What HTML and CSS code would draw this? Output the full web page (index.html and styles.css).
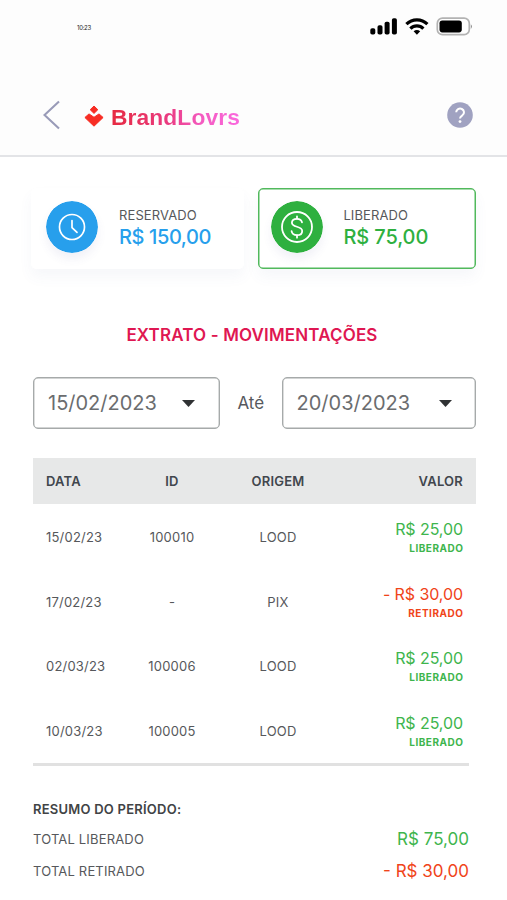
FILE: index.html
```html
<!DOCTYPE html>
<html lang="pt-BR">
<head>
<meta charset="utf-8">
<meta name="viewport" content="width=device-width, initial-scale=1">
<title>BrandLovrs - Extrato</title>
<link rel="stylesheet" href="styles.css">
</head>
<body>
<header class="top">
  <div class="status">
    <span class="time">10:23</span>
    <svg class="status-icons" width="104" height="20" viewBox="0 0 104 20">
      <rect x="0.3" y="11.3" width="5" height="6.2" rx="1.8"/>
      <rect x="7.5" y="8.3" width="5" height="9.2" rx="1.8"/>
      <rect x="14.6" y="4.8" width="5" height="12.7" rx="1.8"/>
      <rect x="21.9" y="1.3" width="5" height="16.2" rx="1.8"/>
      <g fill="none" stroke="#000" stroke-width="3.2">
        <path d="M36.4 7.2a15 15 0 0 1 21 0"/>
        <path d="M40.4 11.6a9.2 9.2 0 0 1 13 0"/>
      </g>
      <path d="M43.6 14.3a5.2 5.2 0 0 1 6.6 0L46.9 17.8z"/>
      <rect x="67.3" y="1.2" width="32" height="16.4" rx="5.2" fill="#fff" stroke="#b3b3b3" stroke-width="1.7"/>
      <rect x="69.5" y="3.4" width="22.3" height="12" rx="2.8"/>
      <path d="M100.8 7.3a3 3 0 0 1 0 4.6z" fill="#888"/>
    </svg>
  </div>
  <div class="nav">
    <svg class="back" width="18" height="30" viewBox="0 0 18 30"><path d="M16 1.5L1.5 15L16 28.5" fill="none" stroke="#999bb8" stroke-width="2.1"/></svg>
    <svg class="mark" width="20" height="22" viewBox="0 0 20 22" fill="#f72d24" stroke="#f72d24" stroke-width="1" stroke-linejoin="round">
      <path d="M10 1L13.8 4.7L10 8.4L6.2 4.7z"/>
      <path d="M.9 12.5L5 8.9L10 12.3L15 8.9L19.1 12.5L10 21.2z"/>
    </svg>
    <span class="brand">BrandLovrs</span>
    <svg class="help" width="26" height="26" viewBox="0 0 26 26"><circle cx="13" cy="13" r="12.8" fill="#a0a2c1"/><path d="M9.2 10.3a3.9 3.7 0 1 1 6.2 3C14 14.2 13 14.8 13 16.6" fill="none" stroke="#fff" stroke-width="2"/><circle cx="13" cy="19.6" r="1.4" fill="#fff"/></svg>
  </div>
</header>
<main class="content">
  <section class="cards">
    <div class="card reserved">
      <svg class="disc" width="52" height="52" viewBox="0 0 52 52"><circle cx="26" cy="26" r="26" fill="#279fec"/><g fill="none" stroke="#fff" stroke-width="1.7" stroke-linecap="round" stroke-linejoin="round"><circle cx="26" cy="26" r="12.5"/><path d="M26 19.5V26.6L31 31.4"/></g></svg>
      <div class="info"><span class="label">RESERVADO</span><span class="amount">R$ 150,00</span></div>
    </div>
    <div class="card released">
      <svg class="disc" width="52" height="52" viewBox="0 0 52 52"><circle cx="26" cy="26" r="26" fill="#2eb03f"/><g fill="none" stroke="#fff" stroke-width="1.8" stroke-linecap="round"><circle cx="26" cy="26" r="15"/><path d="M31 21.3C30.4 19 28.6 17.8 26 17.8c-3 0-5.1 1.6-5.1 4c0 5.2 10.3 2.7 10.3 8.1c0 2.7-2.2 4.3-5.2 4.3s-5-1.5-5.4-4"/><path d="M26 15.5v2M26 34.5v2.2"/></g></svg>
      <div class="info"><span class="label">LIBERADO</span><span class="amount">R$ 75,00</span></div>
    </div>
  </section>
  <h1 class="title">EXTRATO - MOVIMENTAÇÕES</h1>
  <section class="range">
    <div class="select from"><span class="date">15/02/2023</span><svg class="caret" width="13" height="7" viewBox="0 0 13 7"><path d="M0 0H13L6.5 7z"/></svg></div>
    <span class="until">Até</span>
    <div class="select to"><span class="date">20/03/2023</span><svg class="caret" width="13" height="7" viewBox="0 0 13 7"><path d="M0 0H13L6.5 7z"/></svg></div>
  </section>
  <section class="table">
    <div class="row head"><span>DATA</span><span class="mid">ID</span><span class="mid">ORIGEM</span><span class="end">VALOR</span></div>
    <div class="row"><span>15/02/23</span><span class="mid">100010</span><span class="mid">LOOD</span><span class="value in"><span class="sum">R$ 25,00</span><b>LIBERADO</b></span></div>
    <div class="row"><span>17/02/23</span><span class="mid">-</span><span class="mid">PIX</span><span class="value out"><span class="sum">- R$ 30,00</span><b>RETIRADO</b></span></div>
    <div class="row"><span>02/03/23</span><span class="mid">100006</span><span class="mid">LOOD</span><span class="value in"><span class="sum">R$ 25,00</span><b>LIBERADO</b></span></div>
    <div class="row"><span>10/03/23</span><span class="mid">100005</span><span class="mid">LOOD</span><span class="value in"><span class="sum">R$ 25,00</span><b>LIBERADO</b></span></div>
  </section>
  <section class="summary">
    <h2>RESUMO DO PERÍODO:</h2>
    <div class="total in"><span class="name">TOTAL LIBERADO</span><span class="sum">R$ 75,00</span></div>
    <div class="total out"><span class="name">TOTAL RETIRADO</span><span class="sum">- R$ 30,00</span></div>
  </section>
</main>
</body>
</html>
```
FILE: styles.css
```css
* { box-sizing: border-box; }
body { margin: 0; height: 900px; overflow: hidden; background: #fff; font-family: Inter, "Liberation Sans", sans-serif; color: #56585b; }
svg { display: block; flex: none; }
.top { height: 157px; background: #fdfdfd; border-bottom: 2px solid #e3e4e7; }
.status { display: flex; justify-content: space-between; padding: 17px 33px 0 77px; height: 75px; }
.time { font-size: 6px; line-height: 21px; letter-spacing: -0.3px; color: #222; }
.nav { display: flex; align-items: center; height: 80px; padding: 0 34px 0 43px; }
.mark { margin: 2px 0 0 22.5px; }
.brand { margin: 3px 0 0 7.5px; font-family: "Liberation Sans", Inter, sans-serif; font-size: 22.8px; font-weight: 700; line-height: 30px; letter-spacing: 0.1px; background: linear-gradient(90deg, #e62a40 0%, #ea3b82 45%, #f45bc0 70%, #fa69de 100%); background-clip: text; -webkit-background-clip: text; color: transparent; }
.help { margin-left: auto; }
.content { padding: 31px 31px 0 33px; }
.cards { display: flex; justify-content: space-between; margin-left: -2px; }
.card { display: flex; align-items: center; height: 81px; border-radius: 5px; background: #fff; box-shadow: 0 8px 14px rgba(80, 90, 150, .05); }
.reserved { width: 213px; padding: 0 0 3px 15px; }
.released { width: 218px; padding: 0 0 3px 12px; border: 1.5px solid #51b95c; box-shadow: 0 8px 14px rgba(80, 90, 150, .05), inset 0 0 0 .5px #51b95c; }
.disc { border-radius: 50%; box-shadow: 0 6px 10px rgba(80, 80, 150, .08); }
.info { display: flex; flex-direction: column; margin: 2px 0 0 21px; }
.released .info { margin-left: 20.4px; }
.label { font-size: 13px; line-height: 18px; color: #56585b; letter-spacing: .1px; }
.amount { font-size: 20px; line-height: 26px; font-weight: 500; }
.reserved .amount { color: #279fec; letter-spacing: -.4px; }
.released .amount { color: #2eb03f; letter-spacing: -.1px; }
.title { margin: 54px 0 0; padding-right: 5px; text-align: center; font-size: 17px; line-height: 24px; font-weight: 600; letter-spacing: .15px; color: #df1752; }
.range { display: flex; align-items: center; justify-content: space-between; margin-top: 30px; }
.select { display: flex; align-items: center; justify-content: space-between; height: 52px; border: 1px solid #a6aaaa; border-radius: 5px; padding: 0 24px 0 14px; box-shadow: inset 0 0 0 .4px #a6aaaa; }
.from { width: 187px; }
.to { width: 194.5px; padding-right: 23px; }
.date { font-size: 20px; color: #6b6d6f; }
.caret { fill: #303234; }
.until { font-size: 17px; color: #56585d; }
.table { margin-top: 29px; }
.row { display: grid; grid-template-columns: 76px 100px 112px 1fr; align-items: center; height: 64.8px; padding: 1px 13px 0; font-size: 13px; letter-spacing: .2px; }
.head { height: 46px; padding-top: 0; background: #e7e8e8; font-weight: 600; color: #41464d; }
.mid { text-align: center; }
.end { text-align: right; }
.value { display: flex; flex-direction: column; align-items: flex-end; padding-top: 2px; letter-spacing: -.08px; }
.sum { font-size: 16px; line-height: 20px; }
.value b { font-size: 10px; line-height: 18px; font-weight: 700; letter-spacing: .5px; margin-right: -.4px; }
.in .sum, .value.in { color: #3eb54d; }
.out .sum, .value.out { color: #f04419; }
.summary { margin-right: 7px; border-top: 3px solid #e1e1e1; padding-top: 33px; }
.summary h2 { margin: 0; font-size: 13px; line-height: 20px; font-weight: 600; color: #414345; letter-spacing: .23px; }
.total { display: flex; align-items: center; justify-content: space-between; height: 32px; margin-top: 4px; font-size: 13px; }
.name { letter-spacing: .17px; }
.total + .total { margin-top: 0; }
.total .sum { font-size: 17px; }
```
